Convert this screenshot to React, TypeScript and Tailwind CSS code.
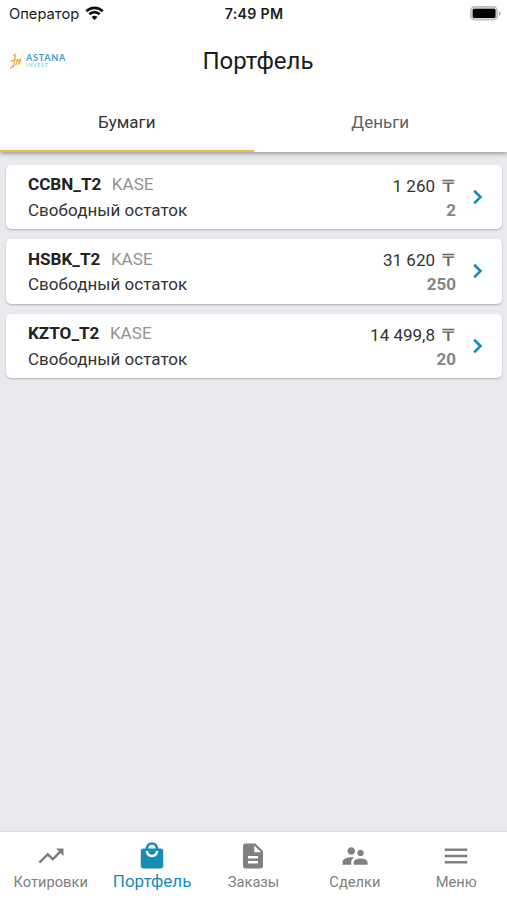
import React from "react";
import { MdDescription, MdLocalMall, MdMenu, MdSupervisorAccount, MdTrendingUp } from "react-icons/md";

const papers = [
  { ticker: "CCBN_T2", value: "1 260", count: "2" },
  { ticker: "HSBK_T2", value: "31 620", count: "250" },
  { ticker: "KZTO_T2", value: "14 499,8", count: "20" },
];

const nav = [
  { label: "Котировки", Icon: MdTrendingUp, active: false },
  { label: "Портфель", Icon: MdLocalMall, active: true },
  { label: "Заказы", Icon: MdDescription, active: false },
  { label: "Сделки", Icon: MdSupervisorAccount, active: false },
  { label: "Меню", Icon: MdMenu, active: false },
];

function Wifi() {
  return (
    <svg className="h-[15px] w-[19px]" viewBox="0 0 19 15" fill="none" stroke="#111" strokeWidth="2.7">
      <path d="M1.3 5.2A11.6 11.6 0 0 1 17.7 5.2" />
      <path d="M4.3 8.3A7.4 7.4 0 0 1 14.7 8.3" />
      <path d="M9.5 14.2 6.5 11.1A4.3 4.3 0 0 1 12.5 11.1Z" fill="#111" stroke="none" />
    </svg>
  );
}

function Battery() {
  return (
    <svg className="h-[15px] w-[31px]" viewBox="0 0 31 15">
      <rect x="0.7" y="0.7" width="26.6" height="13.2" rx="4" fill="#d6d6d6" stroke="#bdbdbd" strokeWidth="1.4" />
      <rect x="2.7" y="2.7" width="22.8" height="9.4" rx="1.5" fill="#000" />
      <path d="M29 5.2c2.3 1 2.3 3.4 0 4.4z" fill="#aaa" />
    </svg>
  );
}

function Logo() {
  return (
    <div className="flex items-center gap-[4px]">
      <svg className="h-[16px] w-[12px]" viewBox="0 0 12 16" fill="none" stroke="#e8b44e" strokeLinecap="round">
        <path d="M3.8 2.5 5.8 1.2M5.2 3.5 3.3 13.8M.8 15 3.3 12.5M1.3 8.2 5.2 6.5" strokeWidth="1.5" />
        <path d="M7.2 5.8 5.8 12.4M6.7 8.4 9.8 6.5 8.4 11.7M10.8 5.6 9.8 10.2" strokeWidth="1.2" />
      </svg>
      <div className="font-['Lato',sans-serif] leading-none">
        <div className="text-[9px] font-bold leading-[9px] tracking-[0.75px] text-[#3aa0c2]">ASTANA</div>
        <div className="text-[5.5px] leading-[6px] tracking-[0.6px] text-[#7fc0d4]">INVEST</div>
      </div>
    </div>
  );
}

export default function App() {
  return (
    <div className="flex h-[900px] w-[507px] flex-col overflow-hidden bg-[#e9eaee] font-['Roboto',sans-serif] text-[#333]">
      <header className="relative z-10 h-[152px] shrink-0 bg-white shadow-[0_1px_5px_rgba(0,0,0,0.45)]">
        <div className="grid h-[28px] grid-cols-3 items-center pl-[9px] pr-[6px] font-['Inter',sans-serif] text-[14px] text-[#1a1a1a]">
          <div className="flex items-center gap-[6px]">
            <span className="pt-px text-[14.7px]">Оператор</span>
            <Wifi />
          </div>
          <div className="pr-[2px] text-center text-[14.2px] font-semibold leading-[18px] tracking-[0.3px]">7:49 PM</div>
          <div className="flex justify-end pb-px">
            <Battery />
          </div>
        </div>
        <div className="grid h-[65px] grid-cols-3 items-center pl-[10px] pr-[10px]">
          <Logo />
          <h1 className="pl-[9px] text-center text-[24px] leading-[28px] text-[#1b1b1b]">Портфель</h1>
        </div>
        <div className="grid h-[59px] grid-cols-2 text-center text-[17px]">
          <div className="border-b-2 border-[#edbb48] pt-[17px] leading-[24px]">Бумаги</div>
          <div className="pt-[17px] leading-[24px] text-[#606060]">Деньги</div>
        </div>
      </header>

      <main className="flex flex-1 flex-col gap-[10px] px-[6px] pt-[12.5px]">
        {papers.map((p) => (
          <div
            key={p.ticker}
            className="mr-[-1px] flex h-[64.6px] items-center rounded-[5px] bg-white pl-[22px] pr-[10px] shadow-[0_1px_2px_rgba(0,0,0,0.25)]"
          >
            <div className="flex-1">
              <div className="flex h-[26px] items-center gap-[10.5px] pt-[2px] text-[17.1px]">
                <span className="font-bold text-[#222]">{p.ticker}</span>
                <span className="text-[#929292]">KASE</span>
              </div>
              <div className="h-[26px] text-[17px] leading-[27px] tracking-[0.03px]">Свободный остаток</div>
            </div>
            <div className="text-right text-[17px]">
              <div className="h-[25px] leading-[29px]">
                {p.value}
                <span className="ml-[9px] mr-[3px] inline-block origin-center scale-x-[1.35] text-[#666]">₸</span>
              </div>
              <div className="h-[25px] font-bold leading-[27px] text-[#868686]">{p.count}</div>
            </div>
            <svg className="ml-[8px] size-[28px]" viewBox="0 0 28 28" fill="none" stroke="#168db5" strokeWidth="2.7">
              <path d="m10.2 7.8 6.2 6.3-6.2 6.3" />
            </svg>
          </div>
        ))}
      </main>

      <nav className="grid h-[69px] shrink-0 grid-cols-5 border-t border-[#dedfe2] bg-white">
        {nav.map(({ label, Icon, active }) =>
          active ? (
            <div key={label} className="flex flex-col items-center pt-[9px] text-[#168db5]">
              <Icon className="size-[30px]" />
              <span className="text-[17px] leading-[20px]">{label}</span>
            </div>
          ) : (
            <div key={label} className="flex flex-col items-center pt-[9px] text-[#808080]">
              <Icon className="size-[30px]" />
              <span className="text-[14.7px] leading-[23px]">{label}</span>
            </div>
          )
        )}
      </nav>
    </div>
  );
}
